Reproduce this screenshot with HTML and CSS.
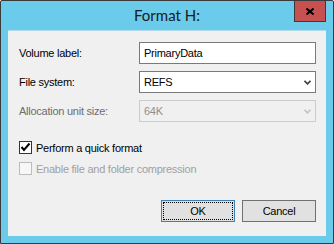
FILE: index.html
```html
<!DOCTYPE html>
<html lang="en">
  <head>
    <meta charset="UTF-8" />
    <link rel="stylesheet" href="styles.css">
    <title>Format H:</title>
  </head>
  <body>
    <div class="window">
      <div class="titlebar">
        <span></span>
        <div class="title">Format H:</div>
        <div class="close">
          <svg width="8" height="7" viewBox="0 0 8 7">
            <path d="M0.5 0.5 L7.5 6.5 M7.5 0.5 L0.5 6.5" stroke="#000" stroke-width="2" fill="none" />
          </svg>
        </div>
      </div>
      <div class="content">
        <div class="fields">
          <div class="row">
            <span class="label">Volume label:</span>
            <div class="textbox">PrimaryData</div>
          </div>
          <div class="row">
            <span class="label">File system:</span>
            <div class="combo">
              <span>REFS</span>
              <svg class="chevron" width="7" height="5" viewBox="0 0 7 5">
                <path d="M0.5 0.8 L3.5 3.8 L6.5 0.8" stroke="#3c3c3c" stroke-width="1.6" fill="none" />
              </svg>
            </div>
          </div>
          <div class="row disabled">
            <span class="label">Allocation unit size:</span>
            <div class="combo">
              <span>64K</span>
              <svg class="chevron" width="7" height="5" viewBox="0 0 7 5">
                <path d="M0.5 0.8 L3.5 3.8 L6.5 0.8" stroke="#c4c4c4" stroke-width="1.6" fill="none" />
              </svg>
            </div>
          </div>
        </div>
        <div class="checks">
          <div class="check">
            <div class="box">
              <svg width="11" height="11" viewBox="0 0 11 11">
                <path d="M1.5 5 L4 8 L9.5 1.5" stroke="#000" stroke-width="2" fill="none" />
              </svg>
            </div>
            <span>Perform a quick format</span>
          </div>
          <div class="check disabled">
            <div class="box"></div>
            <span>Enable file and folder compression</span>
          </div>
        </div>
        <div class="buttons">
          <div class="btn default">OK</div>
          <div class="btn">Cancel</div>
        </div>
      </div>
    </div>
  </body>
</html>
```

FILE: styles.css
```css
body {
  margin: 0;
  font-family: "Liberation Sans", Arial, sans-serif;
  font-size: 11px;
  letter-spacing: -0.25px;
  color: #000000;
}
.window {
  width: 334px;
  height: 244px;
  box-sizing: border-box;
  border: 1px solid #3a3a3a;
  border-radius: 2px 2px 0 0;
  background: #6acbea;
  padding: 0 7px 7px;
  display: flex;
  flex-direction: column;
}
.titlebar {
  height: 30px;
  margin-top: -1px;
  display: grid;
  grid-template-columns: 1fr auto 1fr;
  align-items: start;
}
.title {
  font-family: Lato, "Open Sans", sans-serif;
  font-size: 15px;
  line-height: 30px;
  letter-spacing: 0;
  color: #1a1a1a;
}
.close {
  justify-self: end;
  width: 32px;
  height: 22px;
  box-sizing: border-box;
  border: 1px solid #3a3a3a;
  background: #c75050;
  display: flex;
  align-items: center;
  justify-content: center;
}
.content {
  flex: 1;
  background: #f0f0f0;
  border-top: 1px solid #b4dbe9;
  padding: 11px 10px 0 11px;
  display: flex;
  flex-direction: column;
}
.fields {
  display: flex;
  flex-direction: column;
  gap: 7px;
}
.row {
  display: grid;
  grid-template-columns: 120px 177px;
  align-items: center;
  height: 22px;
}
.textbox,
.combo {
  height: 22px;
  box-sizing: border-box;
  border: 1px solid #7a7a7a;
  background: #ffffff;
  padding: 0 4px;
  display: flex;
  align-items: center;
}
.combo {
  justify-content: space-between;
  padding-right: 4px;
}
.row.disabled .label {
  color: #6d6d6d;
}
.row.disabled .combo {
  border-color: #cccccc;
  background: #f0f0f0;
  color: #8f8f8f;
}
.checks {
  margin-top: 19px;
  display: flex;
  flex-direction: column;
  gap: 8px;
}
.check {
  display: flex;
  align-items: center;
  gap: 4px;
  height: 13px;
}
.check .box {
  width: 13px;
  height: 13px;
  box-sizing: border-box;
  border: 1px solid #333333;
  background: #ffffff;
  display: flex;
  align-items: center;
  justify-content: center;
}
.check.disabled .box {
  border-color: #bcbcbc;
  background: #f7f7f7;
}
.check.disabled span {
  color: #a0a0a0;
}
.buttons {
  margin-top: 25px;
  display: flex;
  justify-content: flex-end;
  gap: 7px;
}
.btn {
  width: 74px;
  height: 22px;
  box-sizing: border-box;
  border: 1px solid #707070;
  background: #e1e1e1;
  display: flex;
  align-items: center;
  justify-content: center;
}
.btn.default {
  border-color: #3c7fb1;
  outline: 1px dotted #000000;
  outline-offset: -3px;
}
```
